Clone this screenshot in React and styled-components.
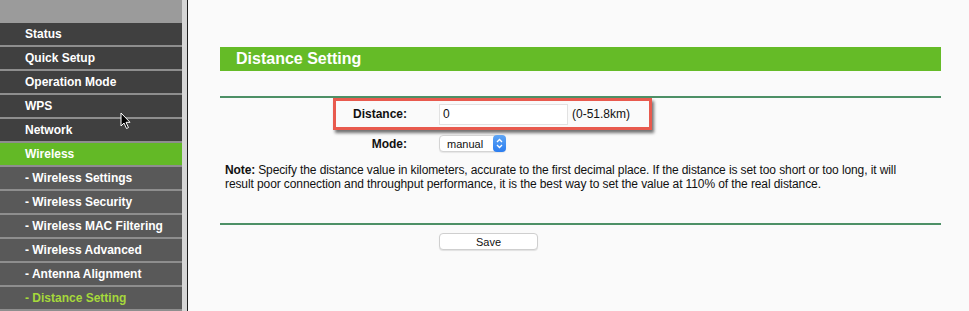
import React from "react";
import styled, { createGlobalStyle } from "styled-components";

const Global = createGlobalStyle`
  html, body { margin: 0; padding: 0; }
  body {
    background: #fafafa;
    font-family: "Liberation Sans", Arial, Helvetica, sans-serif;
    overflow: hidden;
  }
`;

const Page = styled.div`
  position: relative;
  display: flex;
  height: 311px;
  overflow: hidden;
`;

const Sidebar = styled.nav`
  width: 182px;
  flex: none;
  display: flex;
  flex-direction: column;
  background: #8e8e8e;
`;

const SideHeader = styled.div`
  height: 23px;
  background: #9b9b9b;
`;

const MenuList = styled.div`
  display: flex;
  flex-direction: column;
  gap: 2px;
`;

const MenuItem = styled.div`
  height: 22px;
  line-height: 22px;
  padding-left: 25px;
  font-size: 12px;
  font-weight: bold;
  white-space: nowrap;
  color: ${(p) => (p.$current ? "#a6d83b" : "#ffffff")};
  background: ${(p) =>
    p.$active ? "#63b926" : p.$sub ? "#595959" : "#404040"};
`;

const Strip = styled.div`
  width: 5px;
  flex: none;
  background: #d6d6d6;
  border-right: 1px solid #1e1e1e;
`;

const Content = styled.main`
  flex: 1;
  padding: 47px 0 0 32px;
  background: #fafafa;
`;

const Inner = styled.div`
  width: 721px;
  display: flex;
  flex-direction: column;
`;

const TitleBar = styled.div`
  height: 24px;
  line-height: 24px;
  background: #65bb27;
  color: #fff;
  font-size: 16px;
  font-weight: bold;
  padding-left: 16px;
`;

const Rule = styled.div`
  height: 2px;
  background: #4d9066;
  margin-top: ${(p) => p.$top}px;
`;

const FieldRow = styled.div`
  display: flex;
  align-items: center;
  margin-left: ${(p) => (p.$boxed ? 113 : 116)}px;
  width: ${(p) => (p.$boxed ? "313px" : "auto")};
  height: ${(p) => p.$h}px;
  margin-top: ${(p) => p.$mt || 0}px;
  border: ${(p) => (p.$boxed ? "3px solid #e85a4e" : "none")};
  box-shadow: ${(p) =>
    p.$boxed ? "2px 3px 3px rgba(0,0,0,0.55)" : "none"};
`;

const Label = styled.div`
  width: 71px;
  text-align: right;
  font-size: 12px;
  font-weight: bold;
  color: #111;
  margin-right: 32px;
`;

const TextInput = styled.div`
  box-sizing: border-box;
  width: 129px;
  height: 21px;
  line-height: 19px;
  background: #fff;
  border: 1px solid #e2e2e2;
  padding-left: 3px;
  font-size: 12px;
  color: #111;
`;

const Hint = styled.span`
  margin-left: 4px;
  font-size: 12px;
  color: #111;
`;

const SelectBox = styled.div`
  box-sizing: border-box;
  display: flex;
  align-items: center;
  width: 67px;
  height: 17px;
  background: #fff;
  border: 1px solid #d4d4d4;
  border-radius: 4px;
  font-size: 11px;
  color: #111;
  padding-left: 7px;
  box-shadow: 0 1px 1px rgba(0, 0, 0, 0.08);
`;

const SelectText = styled.span`
  flex: 1;
`;

const Stepper = styled.span`
  width: 13px;
  height: 17px;
  margin-right: -1px;
  border-radius: 4px;
  background: linear-gradient(#5fa6f5, #2b7df0);
  display: flex;
  align-items: center;
  justify-content: center;
`;

const Note = styled.p`
  margin: 11px 0 0 5px;
  width: 700px;
  font-size: 12px;
  line-height: 14px;
  letter-spacing: -0.1px;
  color: #111;
`;

const NoteLabel = styled.b`
  margin-right: 3px;
`;

const SaveButton = styled.button`
  margin: 8px 0 0 219px;
  width: 99px;
  height: 17px;
  padding: 0;
  background: #fff;
  border: 1px solid #cfcfcf;
  border-radius: 4px;
  font-family: "Liberation Sans", Arial, sans-serif;
  font-size: 11px;
  color: #111;
  box-shadow: 0 1px 1px rgba(0, 0, 0, 0.1);
`;

const Cursor = styled.svg`
  position: absolute;
  left: 120px;
  top: 112px;
`;

const items = [
  { t: "Status" },
  { t: "Quick Setup" },
  { t: "Operation Mode" },
  { t: "WPS" },
  { t: "Network" },
  { t: "Wireless", active: true },
  { t: "- Wireless Settings", sub: true },
  { t: "- Wireless Security", sub: true },
  { t: "- Wireless MAC Filtering", sub: true },
  { t: "- Wireless Advanced", sub: true },
  { t: "- Antenna Alignment", sub: true },
  { t: "- Distance Setting", sub: true, current: true },
];

export default function App() {
  return (
    <Page>
      <Global />
      <Sidebar>
        <SideHeader />
        <MenuList>
          {items.map((it) => (
            <MenuItem
              key={it.t}
              $sub={it.sub}
              $active={it.active}
              $current={it.current}
            >
              {it.t}
            </MenuItem>
          ))}
        </MenuList>
      </Sidebar>
      <Strip />
      <Content>
        <Inner>
          <TitleBar>Distance Setting</TitleBar>
          <Rule $top={25} />
          <FieldRow $boxed $h={26}>
            <Label>Distance:</Label>
            <TextInput>0</TextInput>
            <Hint>(0-51.8km)</Hint>
          </FieldRow>
          <FieldRow $h={17} $mt={5}>
            <Label>Mode:</Label>
            <SelectBox>
              <SelectText>manual</SelectText>
              <Stepper>
                <svg width="7" height="11" viewBox="0 0 7 11">
                  <path
                    d="M1 4 L3.5 1.5 L6 4 M1 7 L3.5 9.5 L6 7"
                    fill="none"
                    stroke="#fff"
                    strokeWidth="1.3"
                  />
                </svg>
              </Stepper>
            </SelectBox>
          </FieldRow>
          <Note>
            <NoteLabel>Note:</NoteLabel>Specify the distance value in
            kilometers, accurate to the first decimal place. If the distance is
            set too short or too long, it will result poor connection and
            throughput performance, it is the best way to set the value at 110%
            of the real distance.
          </Note>
          <Rule $top={32} />
          <SaveButton>Save</SaveButton>
        </Inner>
      </Content>
      <Cursor width="12" height="18" viewBox="0 0 12 18">
        <path
          d="M1 1 L1 14 L4 11 L6.5 16.5 L8.5 15.6 L6 10.3 L10 10.3 Z"
          fill="#000"
          stroke="#fff"
          strokeWidth="1"
          strokeLinejoin="round"
        />
      </Cursor>
    </Page>
  );
}
